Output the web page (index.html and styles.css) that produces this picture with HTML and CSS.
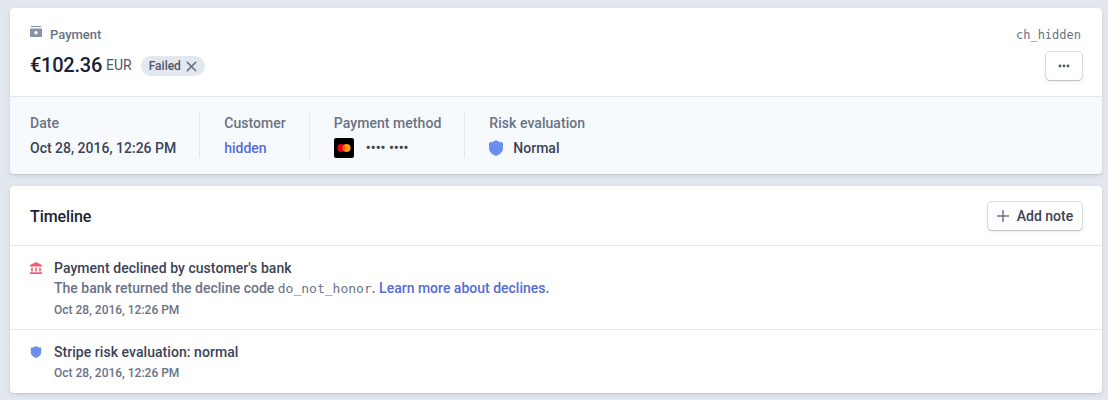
FILE: index.html
```html
<!DOCTYPE html>
<html lang="en">
<head>
<meta charset="utf-8">
<title>Payment</title>
<link rel="stylesheet" href="styles.css">
</head>
<body>
<section class="card">
  <header class="summary">
    <div class="summary-left">
      <div class="kicker">
        <svg class="kicker-icon" width="12" height="12" viewBox="0 0 12 12"><path fill="#8792a2" d="M1 0h10v1H1zM0 2.500h12V11H0zM6 5a1.700 1.700 0 1 0 0 3.400A1.700 1.700 0 0 0 6 5z" fill-rule="evenodd"/></svg>
        <span>Payment</span>
      </div>
      <div class="amount-row">
        <span class="amount">€102.36</span>
        <span class="currency">EUR</span>
        <span class="badge">Failed
          <svg width="11" height="11" viewBox="0 0 10 10"><path d="M.8.8l8.400 8.400M9.200.8L.8 9.200" stroke="#697386" stroke-width="1.300" fill="none"/></svg>
        </span>
      </div>
    </div>
    <div class="summary-right">
      <code class="charge-id">ch_hidden</code>
      <button class="btn btn-more" type="button"><svg width="12" height="4" viewBox="0 0 12 4"><g fill="#4f566b"><circle cx="2" cy="2" r="1.400"/><circle cx="6" cy="2" r="1.400"/><circle cx="10" cy="2" r="1.400"/></g></svg></button>
    </div>
  </header>
  <div class="details">
    <div class="detail">
      <div class="detail-label">Date</div>
      <div class="detail-value">Oct 28, 2016, 12:26 PM</div>
    </div>
    <div class="detail">
      <div class="detail-label">Customer</div>
      <div class="detail-value link">hidden</div>
    </div>
    <div class="detail">
      <div class="detail-label">Payment method</div>
      <div class="detail-value method">
        <svg class="card-brand" width="20" height="20" viewBox="0 0 20 20"><rect width="20" height="20" rx="2" fill="#000"/><circle cx="7.400" cy="10" r="4" fill="#eb001b"/><circle cx="12.600" cy="10" r="4" fill="#f79e1b"/><path d="M10 6.900a4 4 0 0 1 0 6.200 4 4 0 0 1 0-6.200z" fill="#ff5f00"/></svg>
        <span class="dots">•••• ••••</span>
      </div>
    </div>
    <div class="detail">
      <div class="detail-label">Risk evaluation</div>
      <div class="detail-value risk">
        <svg width="14" height="16" viewBox="0 0 14 16"><path fill="#6c8eef" d="M7 0c2 1.400 4.200 2.200 7 2.400V8c0 3.600-2.600 6.400-7 8-4.400-1.600-7-4.400-7-8V2.400C2.800 2.200 5 1.400 7 0z"/></svg>
        <span>Normal</span>
      </div>
    </div>
  </div>
</section>
<section class="card timeline">
  <header class="timeline-head">
    <h2 class="timeline-title">Timeline</h2>
    <button class="btn btn-add" type="button"><svg width="12" height="12" viewBox="0 0 12 12"><path d="M6 0v12M0 6h12" stroke="#697386" stroke-width="1.500" fill="none"/></svg>Add note</button>
  </header>
  <div class="event event-first">
    <svg class="event-icon" width="12" height="12" viewBox="0 0 12 12"><path fill="#ed5f74" d="M6 0l6 3v1.500H0V3zM1.200 5.500h1.600v4H1.200zM5.200 5.500h1.600v4H5.200zM9.200 5.500h1.600v4H9.200zM0 10.300h12V12H0z"/></svg>
    <div class="event-body">
      <div class="event-title">Payment declined by customer's bank</div>
      <div class="event-text">The bank returned the decline code <code class="code">do_not_honor</code>. <span class="link">Learn more about declines.</span></div>
      <div class="event-time">Oct 28, 2016, 12:26 PM</div>
    </div>
  </div>
  <div class="event">
    <svg class="event-icon" width="12" height="12" viewBox="0 0 14 16"><path fill="#6c8eef" d="M7 0c2 1.400 4.200 2.200 7 2.400V8c0 3.600-2.600 6.400-7 8-4.400-1.600-7-4.400-7-8V2.400C2.800 2.200 5 1.400 7 0z"/></svg>
    <div class="event-body">
      <div class="event-title">Stripe risk evaluation: normal</div>
      <div class="event-time">Oct 28, 2016, 12:26 PM</div>
    </div>
  </div>
</section>
</body>
</html>
```
FILE: styles.css
```css
* { box-sizing: border-box; }
html, body { margin: 0; height: 400px; overflow: hidden; }
body {
  background: #e3e8ee;
  padding: 8px 6px 0 10px;
  font-family: Roboto, "Liberation Sans", sans-serif;
  font-size: 14px;
  font-weight: 500;
  color: #3c4257;
  display: flex;
  flex-direction: column;
  gap: 12px;
}
.card {
  background: #fff;
  border-radius: 4px;
  box-shadow: 0 2px 5px rgba(60, 66, 87, .12), 0 1px 1px rgba(0, 0, 0, .08);
}
.summary {
  height: 89px;
  padding: 17px 20px 0;
  display: flex;
  justify-content: space-between;
  border-bottom: 1px solid #e3e8ee;
}
.kicker {
  display: flex;
  align-items: center;
  gap: 8px;
  font-size: 13px;
  line-height: 20px;
  color: #697386;
}
.kicker-icon { margin-top: -6px; }
.amount-row {
  display: flex;
  align-items: center;
  margin-top: 8px;
  height: 24px;
}
.amount { font-size: 20px; line-height: 24px; letter-spacing: -.25px; color: #1a1f36; }
.currency { margin-left: 4px; font-size: 14px; font-weight: 400; color: #4f566b; }
.badge {
  margin: 2px 0 0 9px;
  height: 20px;
  padding: 0 8px;
  display: flex;
  align-items: center;
  gap: 5px;
  border-radius: 10px;
  background: #e3e8ee;
  color: #4f566b;
  font-size: 12px;
}
.summary-right {
  display: flex;
  flex-direction: column;
  align-items: flex-end;
}
.charge-id {
  font-family: "DejaVu Sans Mono", monospace;
  font-size: 12px;
  font-weight: 400;
  line-height: 20px;
  color: #697386;
  margin-right: 1px;
}
.btn {
  display: flex;
  align-items: center;
  justify-content: center;
  padding: 0;
  background: #fff;
  border: 0;
  border-radius: 4px;
  box-shadow: 0 0 0 1px rgba(60, 66, 87, .16), 0 1px 1px rgba(0, 0, 0, .12), 0 2px 5px rgba(60, 66, 87, .08);
  font: inherit;
  color: #3c4257;
}
.btn-more { width: 36px; height: 28px; margin-top: 7px; }
.details {
  height: 77px;
  padding: 16px 20px 0;
  background: #f7fafc;
  border-radius: 0 0 4px 4px;
  display: flex;
}
.detail {
  height: 45px;
  padding: 0 23px 0 24px;
  border-left: 1px solid #e3e8ee;
}
.detail:first-child { padding-left: 0; border-left: 0; }
.detail-label { line-height: 20px; letter-spacing: .05px; color: #697386; }
.detail-value { margin-top: 5px; line-height: 20px; }
.link { color: #556cd6; }
.method, .risk { display: flex; align-items: center; }
.dots { margin-left: 12px; font-size: 14px; }
.risk { gap: 10px; }
.timeline { height: 207px; }
.timeline-head {
  height: 60px;
  padding: 0 20px;
  display: flex;
  align-items: center;
  justify-content: space-between;
  border-bottom: 1px solid #e3e8ee;
}
.timeline-title { margin: 2px 0 0; font-size: 16px; font-weight: 500; letter-spacing: -.1px; color: #1a1f36; }
.btn-add { width: 94px; height: 28px; gap: 8px; }
.event {
  display: flex;
  gap: 12px;
  padding: 12px 20px 0;
}
.event-first { height: 84px; border-bottom: 1px solid #e3e8ee; }
.event-icon { margin-top: 4px; flex: none; }
.event-title { line-height: 20px; letter-spacing: .05px; }
.event-text { line-height: 20px; color: #697386; }
.code {
  font-family: "DejaVu Sans Mono", monospace;
  font-size: 13px;
  font-weight: 400;
  color: #697386;
}
.event-time { margin-top: 1px; line-height: 20px; font-size: 12px; color: #697386; }
```
